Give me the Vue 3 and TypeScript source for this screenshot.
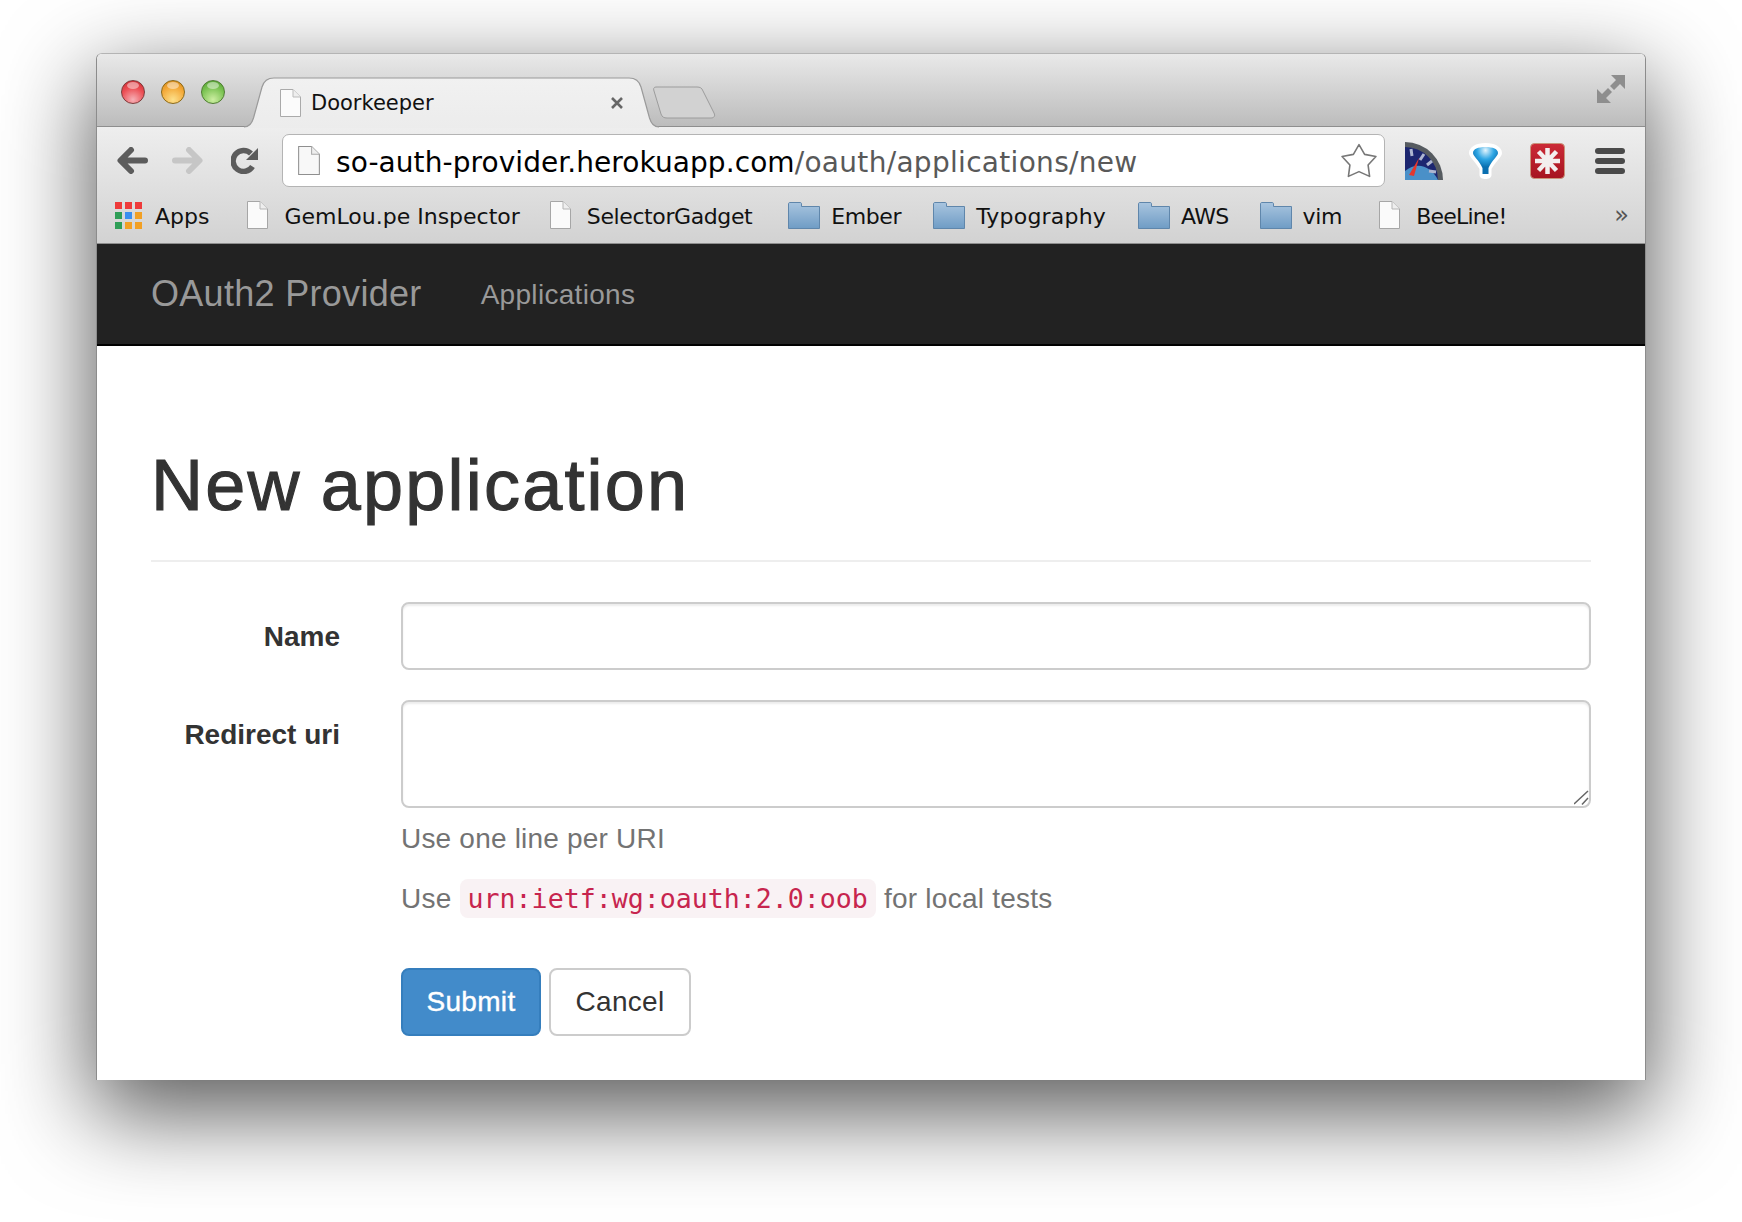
<script setup lang="ts">
interface Bookmark {
  label: string
  kind: 'apps' | 'doc' | 'folder'
  gap: number
  track: number
}

const bookmarks: Bookmark[] = [
  { label: 'Apps', kind: 'apps', gap: 38, track: 0 },
  { label: 'GemLou.pe Inspector', kind: 'doc', gap: 30, track: 0 },
  { label: 'SelectorGadget', kind: 'doc', gap: 36, track: -0.4 },
  { label: 'Ember', kind: 'folder', gap: 32, track: -0.4 },
  { label: 'Typography', kind: 'folder', gap: 32, track: 0.2 },
  { label: 'AWS', kind: 'folder', gap: 31, track: -0.7 },
  { label: 'vim', kind: 'folder', gap: 37, track: -0.3 },
  { label: 'BeeLine!', kind: 'doc', gap: 0, track: -0.8 },
]

const appColors = [
  '#ee3a3a', '#ee3a3a', '#ee3a3a',
  '#2f9e57', '#3b8ff0', '#f2a024',
  '#2f9e57', '#f2a024', '#f2a024',
]
</script>

<template>
  <div class="page">
    <div class="window">
      <div class="tabbar">
        <div class="lights">
          <span class="light red"></span>
          <span class="light orange"></span>
          <span class="light green"></span>
        </div>
        <div class="tab">
          <svg class="tab-shape" width="415" height="51" viewBox="0 0 415 51">
            <defs>
              <linearGradient id="tabfill" x1="0" y1="0" x2="0" y2="1">
                <stop offset="0" stop-color="#f1f1f1" />
                <stop offset="1" stop-color="#ececec" />
              </linearGradient>
            </defs>
            <path
              d="M0 50C6 50 8 46 9.5 41L18 10C20 3 24 1 30 1L385 1C391 1 395 3 397 10L405.5 41C407 46 409 50 415 50V51H0Z"
              fill="url(#tabfill)"
            />
            <path
              d="M0 50C6 50 8 46 9.5 41L18 10C20 3 24 1 30 1L385 1C391 1 395 3 397 10L405.5 41C407 46 409 50 415 50"
              fill="none"
              stroke="#9a9a9a"
              stroke-width="1.2"
            />
          </svg>
          <svg class="doc tab-doc" width="21" height="28" viewBox="0 0 21 28">
            <path d="M.5.5H13L20.5 8V27.5H.5Z" fill="#fbfbfb" stroke="#aaa" />
            <path d="M13 .5V8H20.5" fill="#eee" stroke="#bbb" />
          </svg>
          <span class="tab-title">Doorkeeper</span>
          <svg class="tab-close" width="14" height="14" viewBox="0 0 14 14">
            <path d="M2 2L12 12M12 2L2 12" stroke="#666" stroke-width="2.6" />
          </svg>
        </div>
        <svg class="newtab" width="64" height="33" viewBox="0 0 64 33">
          <path
            d="M5 1H45C48 1 50 2 51 5L62 27C63.5 30 62 32 59 32H15C12 32 10 31 9 28L2 5C1 2 2 1 5 1Z"
            fill="#d2d2d2"
            stroke="#9c9c9c"
          />
        </svg>
        <svg class="fullscreen" width="28" height="28" viewBox="0 0 28 28">
          <path d="M14 0H28V14L23 9L17 15L13 11L19 5Z" fill="#8e8e8e" />
          <path d="M14 28H0V14L5 19L11 13L15 17L9 23Z" fill="#8e8e8e" />
        </svg>
      </div>

      <div class="chrome">
        <div class="toolbar">
          <svg class="tool" width="31" height="27" viewBox="0 0 31 27">
            <path d="M28 13.5H5M14 3L3.5 13.5L14 24" fill="none" stroke="#5c5c5c" stroke-width="6" stroke-linecap="round" stroke-linejoin="round" />
          </svg>
          <svg class="tool forward" width="31" height="27" viewBox="0 0 31 27">
            <path d="M3 13.5H26M17 3L27.5 13.5L17 24" fill="none" stroke="#c6c6c6" stroke-width="6" stroke-linecap="round" stroke-linejoin="round" />
          </svg>
          <svg class="tool reload" width="27" height="27" viewBox="0 0 27 27">
            <path d="M21.5 19.5A10.5 10.5 0 1 1 20 6.5" fill="none" stroke="#5c5c5c" stroke-width="5.5" />
            <path d="M27 1V13H15Z" fill="#5c5c5c" />
          </svg>
          <div class="omnibox">
            <svg class="doc" width="22" height="29" viewBox="0 0 21 28">
              <path d="M.5.5H13L20.5 8V27.5H.5Z" fill="#f8f8f8" stroke="#8f8f8f" />
              <path d="M13 .5V8H20.5" fill="#eee" stroke="#aaa" />
            </svg>
            <span class="url"><span class="host">so-auth-provider.herokuapp.com</span><span class="path">/oauth/applications/new</span></span>
            <svg class="star" width="36" height="35" viewBox="0 0 34 33">
              <path
                d="M17 1.5L22.3 10.7L33 12.7L25.6 20.8L27 31.5L17 27L7 31.5L8.4 20.8L1 12.7L11.7 10.7Z"
                fill="#fff"
                stroke="#777"
                stroke-width="1.5"
                stroke-linejoin="round"
              />
            </svg>
          </div>
          <svg class="ext speed" width="38" height="38" viewBox="0 0 38 38">
            <path d="M0 0A38 38 0 0 1 38 38H0Z" fill="#565b60" />
            <path d="M0 5A33 33 0 0 1 33 38H0Z" fill="#1c2670" />
            <path d="M0 38V29C12 19 26 24 33 38Z" fill="#4a90c8" />
            <path d="M6 7L7 14M19 12L15 18M27 19L22 23M31 30L24 29" stroke="#aeb6d0" stroke-width="3" />
            <path d="M14 16L9 34L4 33Z" fill="#e5372c" />
          </svg>
          <svg class="ext funnel" width="35" height="37" viewBox="0 0 35 37">
            <defs>
              <radialGradient id="funnelfill" cx="0.5" cy="0.12" r="0.62">
                <stop offset="0" stop-color="#e4f5fd" />
                <stop offset="0.55" stop-color="#2ea6e4" />
                <stop offset="1" stop-color="#0a6fb0" />
              </radialGradient>
            </defs>
            <path
              d="M17.5 1C27 1 34 5 34 11C34 15 28 19 23.5 27V33C23.5 36 20 37 17.5 37C15 37 11.5 36 11.5 33V27C7 19 1 15 1 11C1 5 8 1 17.5 1Z"
              fill="#fff"
            />
            <path
              d="M17.5 5C25 5 30 7 30 11C30 14 24 18 20.5 26V32H14.5V26C11 18 5 14 5 11C5 7 10 5 17.5 5Z"
              fill="url(#funnelfill)"
            />
          </svg>
          <svg class="ext pass" width="35" height="36" viewBox="0 0 35 36">
            <defs>
              <linearGradient id="passfill" x1="0" y1="0" x2="0" y2="1">
                <stop offset="0" stop-color="#cc2a36" />
                <stop offset="1" stop-color="#a61420" />
              </linearGradient>
            </defs>
            <rect x=".5" y=".5" width="34" height="35" rx="4" fill="url(#passfill)" stroke="#c9947a" />
            <path d="M17.5 5V31M5 18H30M8.5 8.5L26.5 27.5M26.5 8.5L8.5 27.5" stroke="#f3eeee" stroke-width="4.5" />
          </svg>
          <div class="menu">
            <span></span>
            <span></span>
            <span></span>
          </div>
        </div>

        <div class="bookmarks">
          <div
            v-for="b in bookmarks"
            :key="b.label"
            class="bookmark"
            :style="{ marginRight: b.gap + 'px' }"
          >
            <div v-if="b.kind === 'apps'" class="apps-grid">
              <i v-for="(c, i) in appColors" :key="i" :style="{ background: c }"></i>
            </div>
            <svg v-else-if="b.kind === 'doc'" class="doc bm-doc" width="21" height="28" viewBox="0 0 21 28">
              <path d="M.5.5H13L20.5 8V27.5H.5Z" fill="#fafafa" stroke="#a6a6a6" />
              <path d="M13 .5V8H20.5" fill="#eee" stroke="#b4b4b4" />
            </svg>
            <svg v-else class="folder" width="32" height="27" viewBox="0 0 32 27">
              <defs>
                <linearGradient id="folderfill" x1="0" y1="0" x2="0" y2="1">
                  <stop offset="0" stop-color="#a9c5df" />
                  <stop offset="1" stop-color="#6f9cc5" />
                </linearGradient>
              </defs>
              <path d="M.5 26.5V2C.5 1 1 .5 2 .5H12C13 .5 13.5 1 13.5 2V4.5H31.5V26.5Z" fill="url(#folderfill)" stroke="#5f86ab" />
            </svg>
            <span class="bm-label" :style="{ letterSpacing: b.track + 'px' }">{{ b.label }}</span>
          </div>
          <span class="more">»</span>
        </div>
      </div>

      <nav class="navbar">
        <a class="brand">OAuth2 Provider</a>
        <a class="nav-link">Applications</a>
      </nav>

      <main class="content">
        <h1>New application</h1>
        <form class="form" @submit.prevent>
          <div class="row">
            <label class="row-label">Name</label>
            <input class="control" type="text" />
          </div>
          <div class="row">
            <label class="row-label">Redirect uri</label>
            <div class="field">
              <div class="area-wrap">
                <textarea class="control area"></textarea>
                <svg class="grip" width="15" height="15" viewBox="0 0 15 15">
                  <path d="M0 14L14 1M8 14.5L14 8" stroke="#666" stroke-width="1.5" />
                </svg>
              </div>
              <p class="help first">Use one line per URI</p>
              <p class="help">Use <code>urn:ietf:wg:oauth:2.0:oob</code> for local tests</p>
            </div>
          </div>
          <div class="actions">
            <button class="btn primary" type="submit">Submit</button>
            <button class="btn" type="button">Cancel</button>
          </div>
        </form>
      </main>
    </div>
  </div>
</template>

<style>
html,
body {
  margin: 0;
  background: #fff;
  overflow: hidden;
}
</style>

<style scoped>
.page {
  box-sizing: border-box;
  width: 1742px;
  height: 1222px;
  padding: 53px 0 0 96px;
  overflow: hidden;
  background: #fff;
}

.window {
  width: 1548px;
  border: 1px solid #8c8c8c;
  border-top-color: #b4b4b4;
  border-bottom: 0;
  border-radius: 6px 6px 0 0;
  box-shadow: 0 30px 90px 4px rgba(0, 0, 0, 0.65);
  background: #fff;
}

.tabbar {
  display: flex;
  align-items: flex-start;
  height: 72px;
  padding-left: 24px;
  border-bottom: 1px solid #8e8e8e;
  border-radius: 5px 5px 0 0;
  background: linear-gradient(#e9e9e9, #bcbcbc);
}

.lights {
  display: flex;
  gap: 16px;
  margin-top: 26px;
}

.light {
  position: relative;
  width: 24px;
  height: 24px;
  border-radius: 50%;
  box-sizing: border-box;
  border: 1px solid #7c3c3c;
}

.light::after {
  content: '';
  position: absolute;
  left: 5px;
  top: 1px;
  width: 12px;
  height: 7px;
  border-radius: 50%;
  background: rgba(255, 255, 255, 0.45);
}

.red {
  background: radial-gradient(circle at 50% 85%, #f6b0b6 0, #ec4f55 55%, #c8252c 100%);
}

.orange {
  border-color: #8a6a1a;
  background: radial-gradient(circle at 50% 85%, #fde08a 0, #f3a736 60%, #cf8416 100%);
}

.green {
  border-color: #4f7d33;
  background: radial-gradient(circle at 50% 85%, #cdeea2 0, #78c150 60%, #4f9c2f 100%);
}

.tab {
  position: relative;
  display: flex;
  align-items: center;
  box-sizing: border-box;
  width: 415px;
  height: 51px;
  margin: 23px 0 0 19px;
  padding-left: 36px;
}

.tab-shape {
  position: absolute;
  left: 0;
  top: 0;
}

.tab-doc,
.tab-title,
.tab-close {
  position: relative;
}

.doc,
.folder,
.tool,
.ext,
.star {
  flex: none;
  display: block;
}

.tab-title {
  margin-left: 10px;
  font: 21px "DejaVu Sans", sans-serif;
  color: #111;
}

.tab-close {
  margin-left: auto;
  margin-right: 35px;
}

.newtab {
  margin: 32px 0 0 -7px;
}

.fullscreen {
  margin: 21px 20px 0 auto;
}

.chrome {
  border-bottom: 1px solid #8e8e8e;
  background: linear-gradient(#eeeeee, #d2d2d2);
}

.toolbar {
  display: flex;
  align-items: center;
  padding: 7px 20px 0;
}

.forward {
  margin-left: 24px;
}

.reload {
  margin-left: 28px;
}

.omnibox {
  display: flex;
  align-items: center;
  box-sizing: border-box;
  width: 1103px;
  height: 53px;
  margin-left: 24px;
  padding: 0 7px 0 15px;
  border: 1px solid #b4b4b4;
  border-radius: 7px;
  background: #fff;
}

.url {
  margin: 4px 0 0 16px;
  font: 28px "DejaVu Sans", sans-serif;
  white-space: nowrap;
}

.host {
  letter-spacing: 0.07px;
  color: #000;
}

.path {
  letter-spacing: 0.3px;
  color: #595959;
}

.star {
  margin-left: auto;
}

.speed {
  margin-left: 20px;
}

.funnel {
  margin-left: 25px;
}

.pass {
  margin-left: 27px;
}

.menu {
  display: flex;
  flex-direction: column;
  gap: 4px;
  width: 30px;
  margin-left: 30px;
}

.menu span {
  height: 6px;
  border-radius: 3px;
  background: #4a4a4a;
}

.bookmarks {
  display: flex;
  align-items: center;
  height: 56px;
  padding: 0 16px 0 18px;
}

.bookmark {
  display: flex;
  align-items: center;
}

.apps-grid {
  display: grid;
  grid-template-columns: repeat(3, 7px);
  gap: 3px;
  margin-right: 13px;
}

.apps-grid i {
  display: block;
  height: 7px;
}

.bm-doc {
  margin-right: 16px;
}

.folder {
  margin-right: 11px;
}

.bm-label {
  margin-top: 2px;
  font: 22px "DejaVu Sans", sans-serif;
  color: #111;
  white-space: nowrap;
}

.more {
  margin-left: auto;
  font: 24px "DejaVu Sans", sans-serif;
  color: #555;
}

.navbar {
  display: flex;
  align-items: center;
  height: 100px;
  padding-left: 54px;
  border-bottom: 2px solid #000;
  background: #222;
  font-family: "Liberation Sans", Arial, sans-serif;
}

.brand {
  font-size: 36px;
  letter-spacing: 0.3px;
  color: #999;
}

.nav-link {
  margin-left: 59px;
  padding-top: 2px;
  font-size: 28px;
  letter-spacing: 0.3px;
  color: #999;
}

.content {
  padding: 100px 54px 44px 54px;
  font: 28px/40px "Liberation Sans", Arial, sans-serif;
  color: #333;
}

h1 {
  margin: 0 0 40px;
  padding-bottom: 35px;
  border-bottom: 2px solid #eee;
  font-size: 72px;
  font-weight: 500;
  line-height: 79px;
  letter-spacing: 2.2px;
  word-spacing: -3px;
  -webkit-text-stroke: 1.1px #333;
  color: #333;
}

.row {
  display: flex;
  align-items: flex-start;
  margin-bottom: 30px;
}

.row-label {
  flex: none;
  width: 189px;
  margin-right: 61px;
  padding-top: 15px;
  text-align: right;
  font-weight: 700;
}

.field {
  flex: 1;
  min-width: 0;
}

.area-wrap {
  position: relative;
}

.grip {
  position: absolute;
  right: 2px;
  bottom: 3px;
  pointer-events: none;
}

.control {
  display: block;
  flex: 1;
  box-sizing: border-box;
  width: 100%;
  height: 68px;
  padding: 12px 24px;
  border: 2px solid #ccc;
  border-radius: 8px;
  background: #fff;
  box-shadow: inset 0 2px 2px rgba(0, 0, 0, 0.075);
  font: inherit;
  color: #555;
  outline: none;
}

.area {
  height: 108px;
  resize: none;
}

.help {
  margin: 0;
  letter-spacing: 0.25px;
  color: #737373;
}

.help.first {
  margin: 11px 0 20px;
  letter-spacing: 0.2px;
}

code {
  padding: 4px 8px;
  border-radius: 8px;
  background: #f9f2f4;
  color: #c7254e;
  letter-spacing: 0;
  font: 26.6px "DejaVu Sans Mono", monospace;
}

.actions {
  display: flex;
  gap: 8px;
  margin: 49px 0 0 250px;
}

.btn {
  box-sizing: border-box;
  width: 142px;
  height: 68px;
  padding: 0;
  border: 2px solid #ccc;
  border-radius: 8px;
  background: #fff;
  color: #333;
  letter-spacing: 0.3px;
  font: 28px "Liberation Sans", Arial, sans-serif;
}

.primary {
  width: 140px;
  border-color: #357ebd;
  background: #428bca;
  color: #fff;
  -webkit-text-stroke: 0.4px #fff;
}
</style>
